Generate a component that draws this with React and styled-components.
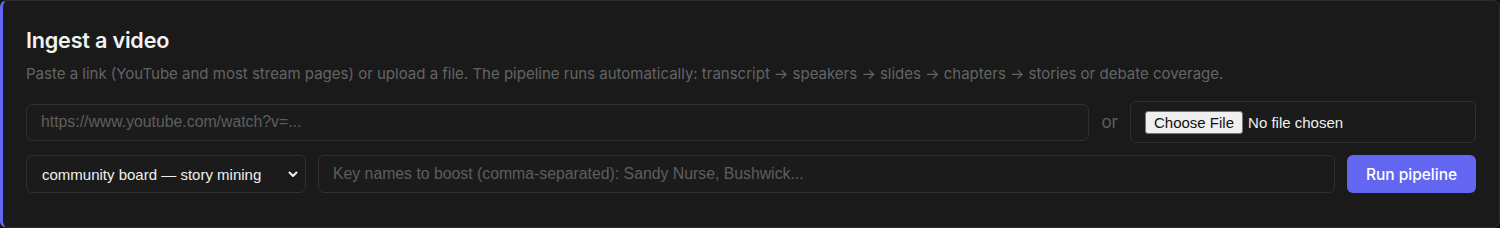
import React from 'react'
import styled, { createGlobalStyle } from 'styled-components'

const Global = createGlobalStyle`
body {
  margin: 0;
  background: #111111;
  font-family: Inter, "Liberation Sans", sans-serif;
}
* { box-sizing: border-box; }
`;

const Card = styled.section`
width: 1500px;
height: 228px;
background: #1a1a1a;
border: 1px solid #2c2c2c;
border-left: 3px solid #6366f1;
border-radius: 7px;
padding: 22px 23px 0 23px;
display: flex;
flex-direction: column;
`;

const Title = styled.h2`
margin: 0;
font-size: 21.6px;
font-weight: 600;
line-height: 34px;
color: #f2f2f2;
letter-spacing: -0.2px;
`;

const Desc = styled.p`
margin: 8px 0 18px;
font-size: 15px;
line-height: 18px;
color: #646464;
`;

const Row = styled.div`
display: flex;
align-items: center;
gap: 12px;
margin-bottom: ${p => p.$mb || 0}px;
`;

const field = `
height: 38px;
background: #1b1b1b;
border: 1px solid #303030;
border-radius: 6px;
color: #e6e6e6;
font-family: "Liberation Sans", Arial, sans-serif;
font-size: 14px;
outline: none;
`;

const TextInput = styled.input`
${field}
flex: 1;
height: ${p => p.$h || 38}px;
padding: 0 14px;
font-size: 15.8px;
&::placeholder { color: #5e5e5e; }
`;

const Or = styled.span`
font-size: 17px;
color: #5e5e5e;
`;

const FileBox = styled.label`
${field}
width: 346px;
height: 42px;
display: flex;
align-items: center;
padding: 0 14px;
font-size: 15px;
input {
  font-family: "Liberation Sans", Arial, sans-serif;
  font-size: 15px;
  color: #f0f0f0;
  color-scheme: light;
}
input::file-selector-button {
  font-family: "Liberation Sans", Arial, sans-serif;
  font-size: 15px;
  background: #efefef;
  color: #111;
  border: 1px solid #767676;
  border-radius: 3px;
  padding: 2px 8px;
  margin-right: 5px;
}
`;

const Select = styled.select`
${field}
width: 280px;
appearance: none;
padding: 0 30px 0 15px;
font-size: 15px;
color: #f0f0f0;
background-image: url("data:image/svg+xml;utf8,<svg xmlns='http://www.w3.org/2000/svg' width='12' height='12' viewBox='0 0 24 24' fill='none' stroke='%23eeeeee' stroke-width='4' stroke-linecap='round' stroke-linejoin='round'><path d='M5 9l7 7 7-7'/></svg>");
background-repeat: no-repeat;
background-position: right 6px center;
`;

const RunButton = styled.button`
height: 38px;
width: 129px;
border: none;
border-radius: 6px;
background: #6366f1;
color: #ffffff;
font-family: Inter, "Liberation Sans", sans-serif;
font-size: 15.5px;
font-weight: 500;
cursor: pointer;
`;

const App = () => {
    return (
        <>
            <Global />
            <Card>
                <Title>Ingest a video</Title>
                <Desc>
                    Paste a link (YouTube and most stream pages) or upload a file. The pipeline runs automatically: transcript → speakers → slides → chapters → stories or debate coverage.
                </Desc>
                <Row $mb={12}>
                    <TextInput $h={37} placeholder="https://www.youtube.com/watch?v=..." />
                    <Or>or</Or>
                    <FileBox>
                        <input type="file" />
                    </FileBox>
                </Row>
                <Row>
                    <Select defaultValue="story">
                        <option value="story">community board — story mining</option>
                        <option value="debate">debate coverage</option>
                    </Select>
                    <TextInput placeholder="Key names to boost (comma-separated): Sandy Nurse, Bushwick..." />
                    <RunButton>Run pipeline</RunButton>
                </Row>
            </Card>
        </>
    )
}

export default App
